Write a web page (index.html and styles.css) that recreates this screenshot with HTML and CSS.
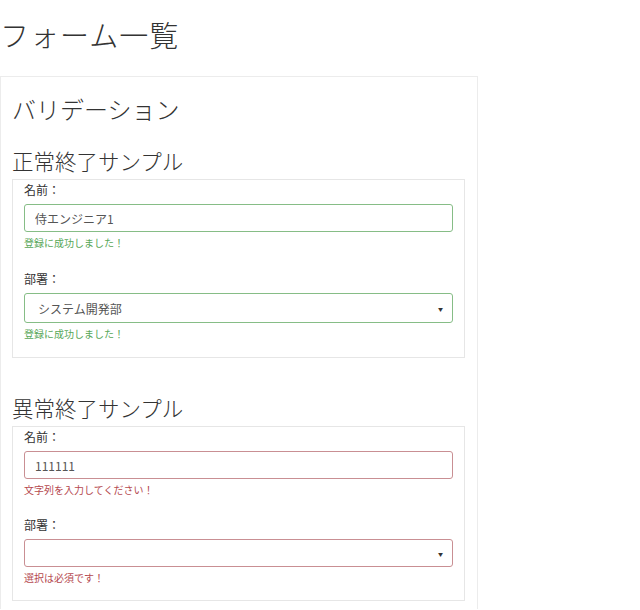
FILE: index.html
```html
<!DOCTYPE html>
<html lang="ja">
<head>
    <meta charset="UTF-8">
    <meta name="viewport" content="width=device-width, initial-scale=1.0">
    <title>フォーム一覧</title>
    <link rel="stylesheet" href="styles.css">
</head>
<body>
    <h1 class="page-title">フォーム一覧</h1>

    <div class="panel">
        <h2 class="panel-title">バリデーション</h2>

        <h3 class="sample-title">正常終了サンプル</h3>
        <div class="sample-box">
            <div class="field">
                <label class="field-label">名前：</label>
                <input class="control is-valid" type="text" value="侍エンジニア1">
                <p class="message success">登録に成功しました！</p>
            </div>
            <div class="field">
                <label class="field-label">部署：</label>
                <div class="control select is-valid">
                    <span class="select-text">システム開発部</span>
                    <span class="select-arrow">▼</span>
                </div>
                <p class="message success">登録に成功しました！</p>
            </div>
        </div>

        <h3 class="sample-title second">異常終了サンプル</h3>
        <div class="sample-box compact">
            <div class="field">
                <label class="field-label">名前：</label>
                <input class="control is-invalid" type="text" value="111111">
                <p class="message error">文字列を入力してください！</p>
            </div>
            <div class="field">
                <label class="field-label">部署：</label>
                <div class="control select is-invalid">
                    <span class="select-text"></span>
                    <span class="select-arrow">▼</span>
                </div>
                <p class="message error">選択は必須です！</p>
            </div>
        </div>
    </div>
</body>
</html>
```

FILE: styles.css
```css
body {
    margin: 0;
    font-family: "Noto Sans CJK JP", "Noto Sans", sans-serif;
    color: #333;
    background: #fff;
}

.page-title {
    font-size: 29px;
    font-weight: 300;
    line-height: 36px;
    margin: 16px 0 24px;
    letter-spacing: 1px;
}

.panel {
    width: 453px;
    border: 1px solid #ececec;
    border-bottom: none;
    padding: 16px 12px 8px 11px;
}

.panel-title {
    font-size: 24px;
    font-weight: 300;
    line-height: 32px;
    margin: 0 0 22px;
}

.sample-title {
    font-size: 21.5px;
    font-weight: 300;
    line-height: 28px;
    margin: 0 0 4px;
}

.sample-title.second {
    margin-top: 36px;
    margin-bottom: 4px;
}

.sample-box {
    border: 1px solid #e6e6e6;
    padding: 0 11px 16px;
}

.sample-box.compact {
    padding-bottom: 15px;
}

.field + .field {
    margin-top: 19px;
}

.compact .field + .field {
    margin-top: 18px;
}

.field-label {
    display: block;
    font-size: 12px;
    line-height: 18px;
    padding-top: 1px;
}

.control {
    display: block;
    box-sizing: border-box;
    width: 100%;
    height: 28px;
    margin-top: 5px;
    padding: 0 10px;
    border: 1px solid #ccc;
    border-radius: 3px;
    font-family: inherit;
    font-size: 12px;
    color: #555;
    background: #fff;
    outline: none;
}

.select {
    display: flex;
    align-items: center;
    height: 30px;
    padding: 0 9px 0 13px;
}

.compact .select {
    height: 28px;
}

.select-text {
    font-size: 12px;
}

.select-arrow {
    margin-left: auto;
    font-size: 5px;
    color: #333;
}

.is-valid {
    border-color: #86bd86;
}

.is-invalid {
    border-color: #c98f93;
}

.message {
    font-size: 10px;
    line-height: 15px;
    margin: 3px 0 0;
}

.success {
    color: #58a758;
}

.error {
    color: #b5494f;
}
```
